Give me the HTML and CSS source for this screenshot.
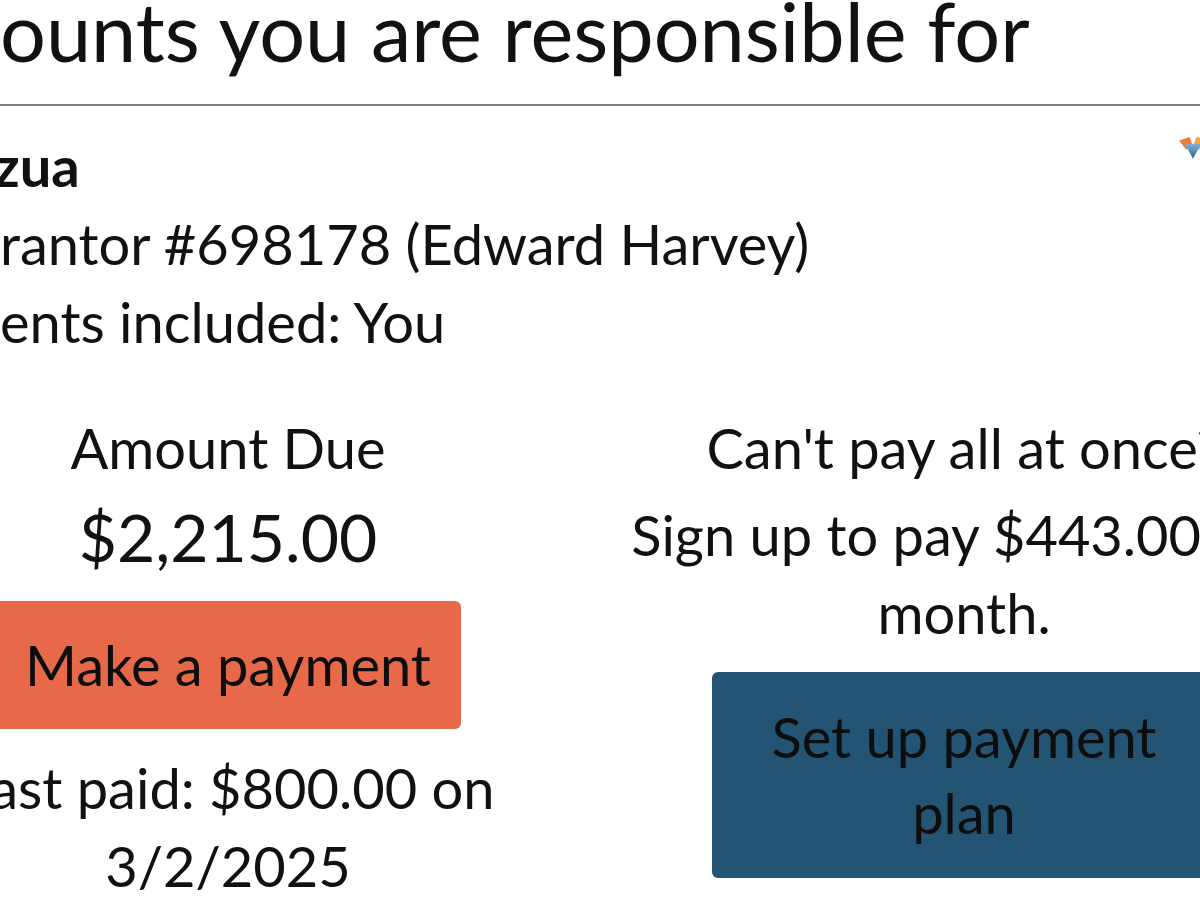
FILE: index.html
```html
<!DOCTYPE html>
<html lang="en">
<head>
<meta charset="utf-8">
<title>Accounts you are responsible for</title>
<link rel="stylesheet" href="styles.css">
</head>
<body>
<main class="page">
  <h1 class="title">ounts you are responsible for</h1>
  <section class="card">
    <div class="card-head">
      <div class="info">
        <div class="name">zua</div>
        <div class="line">rantor #698178 (Edward Harvey)</div>
        <div class="line">ents included: You</div>
      </div>
      <svg class="logo" viewBox="0 0 24 20" aria-hidden="true">
        <defs>
          <linearGradient id="bl" x1="0" y1="0" x2="0" y2="1">
            <stop offset="0" stop-color="#7fb0dc"/>
            <stop offset="1" stop-color="#2d5f8f"/>
          </linearGradient>
        </defs>
        <polygon points="0,3 9,0 12,8 6,11" fill="#ef7d3a"/>
        <polygon points="24,2 15,0 12,8 18,11" fill="#f4a43a"/>
        <polygon points="5,6 19,6 12,19" fill="url(#bl)"/>
      </svg>
    </div>
    <div class="cols">
      <div class="col col-pay">
        <div class="label">Amount Due</div>
        <div class="amount">$2,215.00</div>
        <button class="btn btn-orange" type="button">Make a payment</button>
        <div class="last">Last paid: $800.00 on 3/2/2025</div>
      </div>
      <div class="col col-plan">
        <div class="label">Can't pay all at once?</div>
        <div class="sign">Sign up to pay $443.00 per month.</div>
        <button class="btn btn-blue" type="button">Set up payment plan</button>
      </div>
    </div>
  </section>
</main>
</body>
</html>
```

FILE: styles.css
```css
html, body {
  margin: 0;
  padding: 0;
  background: #ffffff;
}
body {
  width: 1200px;
  height: 900px;
  overflow: hidden;
  font-family: Lato, "Liberation Sans", sans-serif;
  color: #111111;
}
.page {
  width: 1200px;
}
.title {
  margin: -14px 0 0 0;
  font-size: 81px;
  line-height: 90px;
  font-weight: 400;
  white-space: nowrap;
  padding-bottom: 28px;
  border-bottom: 2px solid #7f7f7f;
}
.card {
  padding-top: 21px;
}
.card-head {
  display: flex;
  justify-content: space-between;
  align-items: flex-start;
}
.info {
  font-size: 56px;
  line-height: 78px;
}
.name {
  font-weight: 700;
  margin-left: -6px;
}
.line {
  white-space: nowrap;
}
.logo {
  width: 28px;
  height: 23px;
  margin-top: 10px;
  margin-right: -7px;
}
.cols {
  display: grid;
  grid-template-columns: 736px 736px;
  margin-left: -140px;
  margin-top: 48px;
  font-size: 56px;
  line-height: 78px;
  text-align: center;
}
.col {
  display: flex;
  flex-direction: column;
  align-items: center;
}
.col-pay {
  padding: 0 98px;
}
.col-plan {
  padding: 0 18px;
}
.amount {
  font-size: 66px;
  line-height: 90px;
  margin-top: 5px;
}
.btn {
  font-family: inherit;
  font-size: 56px;
  color: #0d0d0d;
  border: none;
  border-radius: 6px;
  cursor: pointer;
}
.btn-orange {
  background: #e8684a;
  height: 128px;
  line-height: 78px;
  padding: 0 30px;
  margin-top: 19px;
}
.last {
  margin-top: 20px;
}
.sign {
  margin-top: 9px;
}
.btn-blue {
  background: #245474;
  width: 505px;
  height: 206px;
  line-height: 76px;
  padding: 27px 40px;
  margin-top: 20px;
}
```
